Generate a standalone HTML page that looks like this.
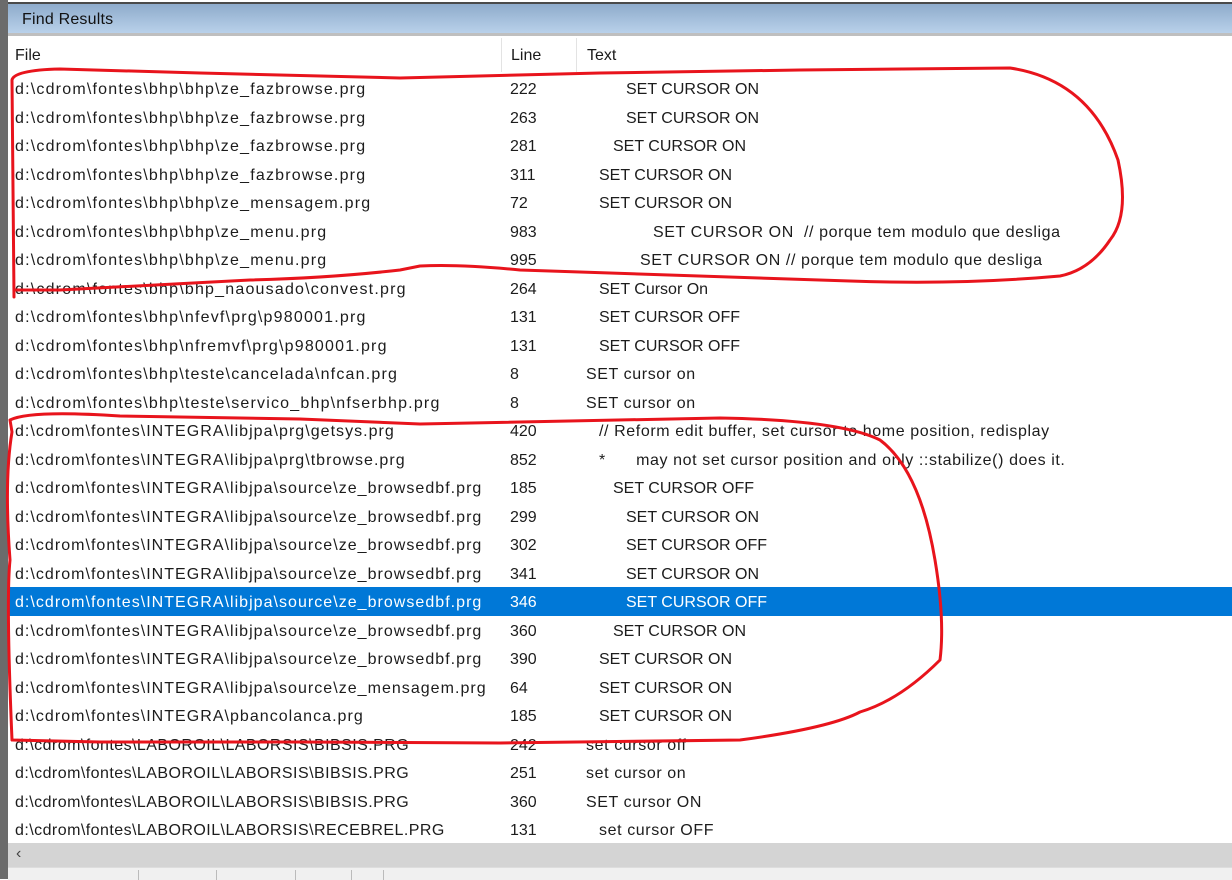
<!DOCTYPE html>
<html><head><meta charset="utf-8"><style>
body{margin:0;width:1232px;height:879px;overflow:hidden;background:#fff;font-family:"Liberation Sans",sans-serif;position:relative}
.lb{position:absolute;left:0;top:0;width:8px;height:879px;background:#6b6b6b}
.tb{position:absolute;left:8px;top:2px;width:1224px;height:34px;background:linear-gradient(#8eabcb,#b9d1ea);border-top:2px solid #4a4a4a;border-bottom:3px solid #bfbfbf;box-sizing:border-box}
.tb span{position:absolute;left:14px;top:7px;font-size:16px;color:#111;letter-spacing:0.2px}
.hd{position:absolute;left:8px;top:38px;width:1224px;height:34px;background:#fff;font-size:16px;color:#1a1a1a}
.hd span{position:absolute;top:9px}
.sep{position:absolute;top:0;width:1px;height:34px;background:#e3e3e3}
.r{position:absolute;left:8px;width:1224px;height:28.5px;font-size:16px;color:#1c1c1c}
.r span{position:absolute;top:7px;white-space:pre}
.r span:first-child{letter-spacing:1.2px}
.r span:nth-child(3){letter-spacing:0}
.r span.lc{letter-spacing:0.6px}
.r.i span:first-child{letter-spacing:1.03px}
.r.l span:first-child{letter-spacing:0.45px}
.sel{background:#0078d7;color:#fff}
.sb{position:absolute;left:8px;top:843px;width:1224px;height:24px;background:#d4d4d4}
.sb span{position:absolute;left:8px;top:2px;font-size:16px;color:#444}
.st{position:absolute;left:8px;top:867px;width:1224px;height:12px;background:#f0f0f0;border-top:1px solid #ddd}
.st i{position:absolute;top:2px;width:1px;height:10px;background:#bbb}
</style></head><body>
<div class="lb"></div>
<div class="tb"><span>Find Results</span></div>
<div class="hd"><span style="left:7px">File</span><div class="sep" style="left:493px"></div><span style="left:503px">Line</span><div class="sep" style="left:568px"></div><span style="left:579px">Text</span></div>
<div class="r" style="top:74px"><span style="left:7px">d:\cdrom\fontes\bhp\bhp\ze_fazbrowse.prg</span><span style="left:502px">222</span><span style="left:618px">SET CURSOR ON</span></div>
<div class="r" style="top:102.5px"><span style="left:7px">d:\cdrom\fontes\bhp\bhp\ze_fazbrowse.prg</span><span style="left:502px">263</span><span style="left:618px">SET CURSOR ON</span></div>
<div class="r" style="top:131px"><span style="left:7px">d:\cdrom\fontes\bhp\bhp\ze_fazbrowse.prg</span><span style="left:502px">281</span><span style="left:605px">SET CURSOR ON</span></div>
<div class="r" style="top:159.5px"><span style="left:7px">d:\cdrom\fontes\bhp\bhp\ze_fazbrowse.prg</span><span style="left:502px">311</span><span style="left:591px">SET CURSOR ON</span></div>
<div class="r" style="top:188px"><span style="left:7px">d:\cdrom\fontes\bhp\bhp\ze_mensagem.prg</span><span style="left:502px">72</span><span style="left:591px">SET CURSOR ON</span></div>
<div class="r" style="top:216.5px"><span style="left:7px">d:\cdrom\fontes\bhp\bhp\ze_menu.prg</span><span style="left:502px">983</span><span style="left:645px" class="lc">SET CURSOR ON  // porque tem modulo que desliga</span></div>
<div class="r" style="top:245px"><span style="left:7px">d:\cdrom\fontes\bhp\bhp\ze_menu.prg</span><span style="left:502px">995</span><span style="left:632px" class="lc">SET CURSOR ON // porque tem modulo que desliga</span></div>
<div class="r" style="top:273.5px"><span style="left:7px">d:\cdrom\fontes\bhp\bhp_naousado\convest.prg</span><span style="left:502px">264</span><span style="left:591px">SET Cursor On</span></div>
<div class="r" style="top:302px"><span style="left:7px">d:\cdrom\fontes\bhp\nfevf\prg\p980001.prg</span><span style="left:502px">131</span><span style="left:591px">SET CURSOR OFF</span></div>
<div class="r" style="top:330.5px"><span style="left:7px">d:\cdrom\fontes\bhp\nfremvf\prg\p980001.prg</span><span style="left:502px">131</span><span style="left:591px">SET CURSOR OFF</span></div>
<div class="r" style="top:359px"><span style="left:7px">d:\cdrom\fontes\bhp\teste\cancelada\nfcan.prg</span><span style="left:502px">8</span><span style="left:578px" class="lc">SET cursor on</span></div>
<div class="r" style="top:387.5px"><span style="left:7px">d:\cdrom\fontes\bhp\teste\servico_bhp\nfserbhp.prg</span><span style="left:502px">8</span><span style="left:578px" class="lc">SET cursor on</span></div>
<div class="r i" style="top:416px"><span style="left:7px">d:\cdrom\fontes\INTEGRA\libjpa\prg\getsys.prg</span><span style="left:502px">420</span><span style="left:591px" class="lc">// Reform edit buffer, set cursor to home position, redisplay</span></div>
<div class="r i" style="top:444.5px"><span style="left:7px">d:\cdrom\fontes\INTEGRA\libjpa\prg\tbrowse.prg</span><span style="left:502px">852</span><span style="left:591px" class="lc">*      may not set cursor position and only ::stabilize() does it.</span></div>
<div class="r i" style="top:473px"><span style="left:7px">d:\cdrom\fontes\INTEGRA\libjpa\source\ze_browsedbf.prg</span><span style="left:502px">185</span><span style="left:605px">SET CURSOR OFF</span></div>
<div class="r i" style="top:501.5px"><span style="left:7px">d:\cdrom\fontes\INTEGRA\libjpa\source\ze_browsedbf.prg</span><span style="left:502px">299</span><span style="left:618px">SET CURSOR ON</span></div>
<div class="r i" style="top:530px"><span style="left:7px">d:\cdrom\fontes\INTEGRA\libjpa\source\ze_browsedbf.prg</span><span style="left:502px">302</span><span style="left:618px">SET CURSOR OFF</span></div>
<div class="r i" style="top:558.5px"><span style="left:7px">d:\cdrom\fontes\INTEGRA\libjpa\source\ze_browsedbf.prg</span><span style="left:502px">341</span><span style="left:618px">SET CURSOR ON</span></div>
<div class="r i sel" style="top:587px"><span style="left:7px">d:\cdrom\fontes\INTEGRA\libjpa\source\ze_browsedbf.prg</span><span style="left:502px">346</span><span style="left:618px">SET CURSOR OFF</span></div>
<div class="r i" style="top:615.5px"><span style="left:7px">d:\cdrom\fontes\INTEGRA\libjpa\source\ze_browsedbf.prg</span><span style="left:502px">360</span><span style="left:605px">SET CURSOR ON</span></div>
<div class="r i" style="top:644px"><span style="left:7px">d:\cdrom\fontes\INTEGRA\libjpa\source\ze_browsedbf.prg</span><span style="left:502px">390</span><span style="left:591px">SET CURSOR ON</span></div>
<div class="r i" style="top:672.5px"><span style="left:7px">d:\cdrom\fontes\INTEGRA\libjpa\source\ze_mensagem.prg</span><span style="left:502px">64</span><span style="left:591px">SET CURSOR ON</span></div>
<div class="r i" style="top:701px"><span style="left:7px">d:\cdrom\fontes\INTEGRA\pbancolanca.prg</span><span style="left:502px">185</span><span style="left:591px">SET CURSOR ON</span></div>
<div class="r l" style="top:729.5px"><span style="left:7px">d:\cdrom\fontes\LABOROIL\LABORSIS\BIBSIS.PRG</span><span style="left:502px">242</span><span style="left:578px" class="lc">set cursor off</span></div>
<div class="r l" style="top:758px"><span style="left:7px">d:\cdrom\fontes\LABOROIL\LABORSIS\BIBSIS.PRG</span><span style="left:502px">251</span><span style="left:578px" class="lc">set cursor on</span></div>
<div class="r l" style="top:786.5px"><span style="left:7px">d:\cdrom\fontes\LABOROIL\LABORSIS\BIBSIS.PRG</span><span style="left:502px">360</span><span style="left:578px" class="lc">SET cursor ON</span></div>
<div class="r l" style="top:815px;height:28px"><span style="left:7px">d:\cdrom\fontes\LABOROIL\LABORSIS\RECEBREL.PRG</span><span style="left:502px">131</span><span style="left:591px" class="lc">set cursor OFF</span></div>
<div class="sb"><span>&#8249;</span></div>
<div class="st"><i style="left:130px"></i><i style="left:208px"></i><i style="left:287px"></i><i style="left:343px"></i><i style="left:375px"></i></div>
<svg width="1232" height="879" style="position:absolute;left:0;top:0" fill="none" stroke="#e8141c" stroke-width="3" stroke-linecap="round" stroke-linejoin="round">
<path d="M14,297 L12,80 Q14,70 60,69 L200,73 L400,78 L600,73 L800,70 L1010,68 Q1090,80 1118,160 Q1130,215 1110,240 Q1090,270 1060,276 Q960,285 850,281 Q700,276 520,270 Q460,264 420,266 L400,270 Q330,278 250,280 L60,290 L16,290"/>
<path d="M12,432 L10,420 Q30,410 120,416 L300,419 L420,424 Q600,421 720,418 Q840,420 880,440 Q920,470 935,560 Q945,620 940,660 Q900,700 860,712 Q830,728 740,740 L500,743 L300,742 L100,742 L12,740 Q6,600 10,560 Q4,480 12,432"/>
</svg>
</body></html>
